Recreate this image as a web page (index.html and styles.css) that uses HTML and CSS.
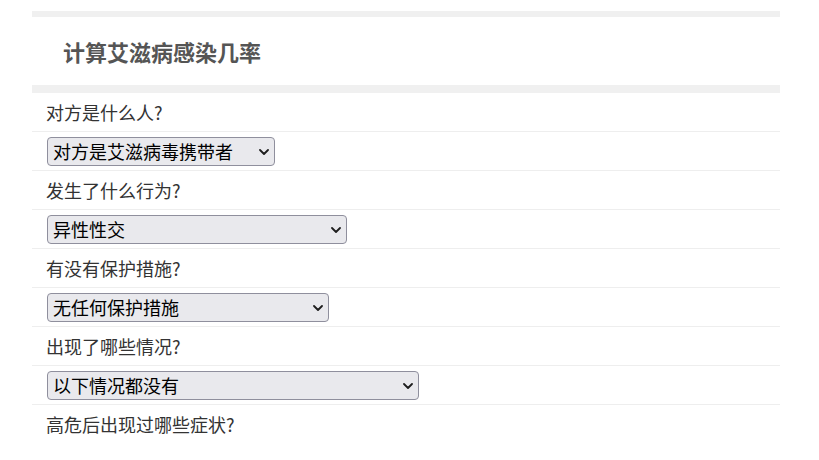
FILE: index.html
```html
<!DOCTYPE html>
<html lang="zh">
<head>
<meta charset="utf-8">
<title>计算艾滋病感染几率</title>
<link rel="stylesheet" href="styles.css">
</head>
<body>
<div class="page">
  <div class="bar bar-top"></div>
  <div class="header"><h1 class="title">计算艾滋病感染几率</h1></div>
  <div class="bar bar-mid"></div>
  <div class="row label">对方是什么人?</div>
  <div class="row field">
    <span class="selwrap">
      <select class="sel w1"><option>对方是艾滋病毒携带者</option></select>
      <svg class="chev" width="10" height="6" viewBox="0 0 10 6"><path d="M1 1 L5 5 L9 1" fill="none" stroke="#1e1e1e" stroke-width="1.8" stroke-linecap="round" stroke-linejoin="round"/></svg>
    </span>
  </div>
  <div class="row label">发生了什么行为?</div>
  <div class="row field">
    <span class="selwrap">
      <select class="sel w2"><option>异性性交</option></select>
      <svg class="chev" width="10" height="6" viewBox="0 0 10 6"><path d="M1 1 L5 5 L9 1" fill="none" stroke="#1e1e1e" stroke-width="1.8" stroke-linecap="round" stroke-linejoin="round"/></svg>
    </span>
  </div>
  <div class="row label">有没有保护措施?</div>
  <div class="row field">
    <span class="selwrap">
      <select class="sel w3"><option>无任何保护措施</option></select>
      <svg class="chev" width="10" height="6" viewBox="0 0 10 6"><path d="M1 1 L5 5 L9 1" fill="none" stroke="#1e1e1e" stroke-width="1.8" stroke-linecap="round" stroke-linejoin="round"/></svg>
    </span>
  </div>
  <div class="row label">出现了哪些情况?</div>
  <div class="row field">
    <span class="selwrap">
      <select class="sel w4"><option>以下情况都没有</option></select>
      <svg class="chev" width="10" height="6" viewBox="0 0 10 6"><path d="M1 1 L5 5 L9 1" fill="none" stroke="#1e1e1e" stroke-width="1.8" stroke-linecap="round" stroke-linejoin="round"/></svg>
    </span>
  </div>
  <div class="row label last">高危后出现过哪些症状?</div>
</div>
</body>
</html>
```
FILE: styles.css
```css
html, body {
  margin: 0;
  padding: 0;
  background: #fff;
}
body {
  font-family: "Noto Sans CJK SC", "Noto Sans", sans-serif;
  color: #333;
}
.page {
  width: 748px;
  margin-left: 32px;
  padding-top: 11px;
}
.bar {
  background: #f0f0f0;
}
.bar-top {
  height: 6px;
}
.bar-mid {
  height: 8px;
}
.header {
  height: 68px;
  display: flex;
  align-items: center;
  padding-left: 31px;
}
.title {
  margin: 0;
  font-size: 22px;
  font-weight: bold;
  color: #555;
  line-height: 1;
}
.row {
  height: 38px;
  border-bottom: 1px solid #eeeeee;
  display: flex;
  align-items: center;
  box-sizing: content-box;
}
.row.last {
  border-bottom: none;
}
.label {
  padding-left: 14px;
  font-size: 18px;
  color: #333;
}
.field {
  padding-left: 15px;
}
.selwrap {
  position: relative;
  display: inline-flex;
}
.sel {
  -webkit-appearance: none;
  appearance: none;
  height: 29px;
  font-family: "Noto Sans CJK SC", "Noto Sans", sans-serif;
  font-size: 18px;
  color: #000;
  background-color: #e9e9ed;
  border: 1px solid #8f8f9d;
  border-radius: 4px;
  padding: 0 0 0 5px;
  margin: 0;
  line-height: 27px;
}
.chev {
  position: absolute;
  right: 6px;
  top: 12px;
  pointer-events: none;
}
.w1 { width: 228px; }
.w2 { width: 300px; }
.w3 { width: 282px; }
.w4 { width: 372px; }
```
